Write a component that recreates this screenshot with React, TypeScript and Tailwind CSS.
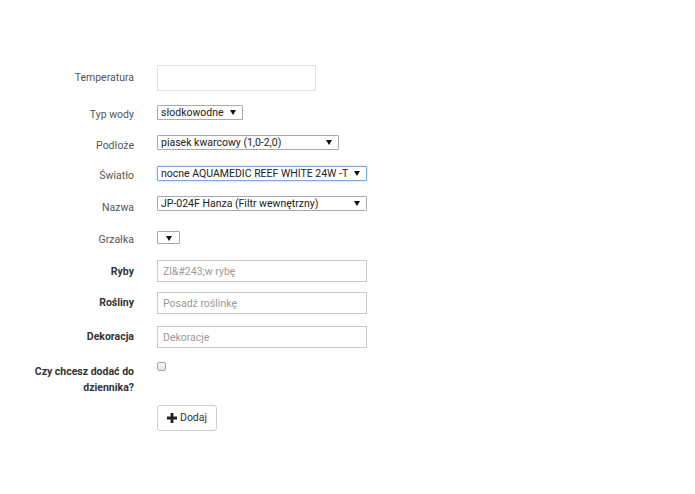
import type { ReactNode } from "react";

const font = { fontFamily: "Roboto, 'Open Sans', Arial, sans-serif" };

function Row({
  label,
  bold,
  h,
  pt,
  children,
}: {
  label: ReactNode;
  bold?: boolean;
  h: string;
  pt: string;
  children: ReactNode;
}) {
  return (
    <div className={`flex items-start ${h}`}>
      <label
        className={`ml-[18px] mr-[23px] w-[116px] shrink-0 text-right text-[10.5px] leading-[16px] ${pt} ${
          bold ? "font-bold text-[#333]" : "text-[#555]"
        }`}
      >
        {label}
      </label>
      {children}
    </div>
  );
}

function Select({
  w,
  h = "h-[15px]",
  value,
  focused,
}: {
  w: string;
  h?: string;
  value: string;
  focused?: boolean;
}) {
  return (
    <div className={`relative shrink-0 ${w} ${h}`}>
      <select
        defaultValue={value}
        className={`block h-full w-full appearance-none rounded-[1px] border bg-white py-0 pl-[3px] pr-[18px] text-[10.5px] leading-[13px] text-[#222] outline-none ${
          focused ? "border-[#7aa7e6] shadow-[0_0_2px_#9cc0f0]" : "border-[#a9a9a9]"
        }`}
      >
        <option value={value}>{value}</option>
      </select>
      <svg
        className="pointer-events-none absolute right-[7px] top-[5px] block"
        width="6"
        height="5"
        viewBox="0 0 6 5"
      >
        <path d="M0 0h6L3 5z" fill="#111" />
      </svg>
    </div>
  );
}

function TextInput({ placeholder, light }: { placeholder?: string; light?: boolean }) {
  return (
    <input
      placeholder={placeholder}
      className={`block border bg-white px-[5px] text-[10.5px] text-[#333] outline-none placeholder:text-[#9a9a9a] ${
        light ? "h-[26px] w-[159px] border-[#e2e2e2]" : "h-[22px] w-[210px] border-[#c8c8c8]"
      }`}
    />
  );
}

export default function App() {
  return (
    <div className="min-h-screen bg-white pt-[65px]" style={font}>
      <Row label="Temperatura" h="h-[40px]" pt="pt-[5px]">
        <TextInput light />
      </Row>
      <Row label="Typ wody" h="h-[30px]" pt="pt-[2px]">
        <Select w="w-[86px]" value="słodkowodne" />
      </Row>
      <Row label="Podłoże" h="h-[31px]" pt="pt-[3px]">
        <Select w="w-[182px]" value="piasek kwarcowy (1,0-2,0)" />
      </Row>
      <Row label="Światło" h="h-[30px]" pt="pt-[2px]">
        <Select w="w-[210px]" value="nocne AQUAMEDIC REEF WHITE 24W -T5" focused />
      </Row>
      <Row label="Nazwa" h="h-[35px]" pt="pt-[4px]">
        <Select w="w-[210px]" value="JP-024F Hanza (Filtr wewnętrzny)" />
      </Row>
      <Row label="Grzałka" h="h-[29px]" pt="pt-[1px]">
        <Select w="w-[22px]" h="h-[13px]" value="" />
      </Row>
      <Row label="Ryby" bold h="h-[32px]" pt="pt-[4px]">
        <TextInput placeholder={"Zl&#243;w rybę"} />
      </Row>
      <Row label="Rośliny" bold h="h-[34px]" pt="pt-[3px]">
        <TextInput placeholder="Posadź roślinkę" />
      </Row>
      <Row label="Dekoracja" bold h="h-[36px]" pt="pt-[3px]">
        <TextInput placeholder="Dekoracje" />
      </Row>
      <Row label="Czy chcesz dodać do dziennika?" bold h="h-[43px]" pt="pt-[2px]">
        <span className="block h-[9px] w-[9px] rounded-[2px] border border-[#a5a5a5] bg-gradient-to-b from-[#fbfbfb] to-[#e3e3e3]" />
      </Row>
      <div className="ml-[157px]">
        <button className="flex h-[26px] w-[60px] items-center justify-center gap-[3px] rounded-[3px] border border-[#cfcfcf] bg-white text-[10.5px] text-[#333]">
          <svg width="10" height="10" viewBox="0 0 10 10">
            <path d="M3.6 0h2.8v3.6H10v2.8H6.4V10H3.6V6.4H0V3.6h3.6z" fill="#222" />
          </svg>
          Dodaj
        </button>
      </div>
    </div>
  );
}
